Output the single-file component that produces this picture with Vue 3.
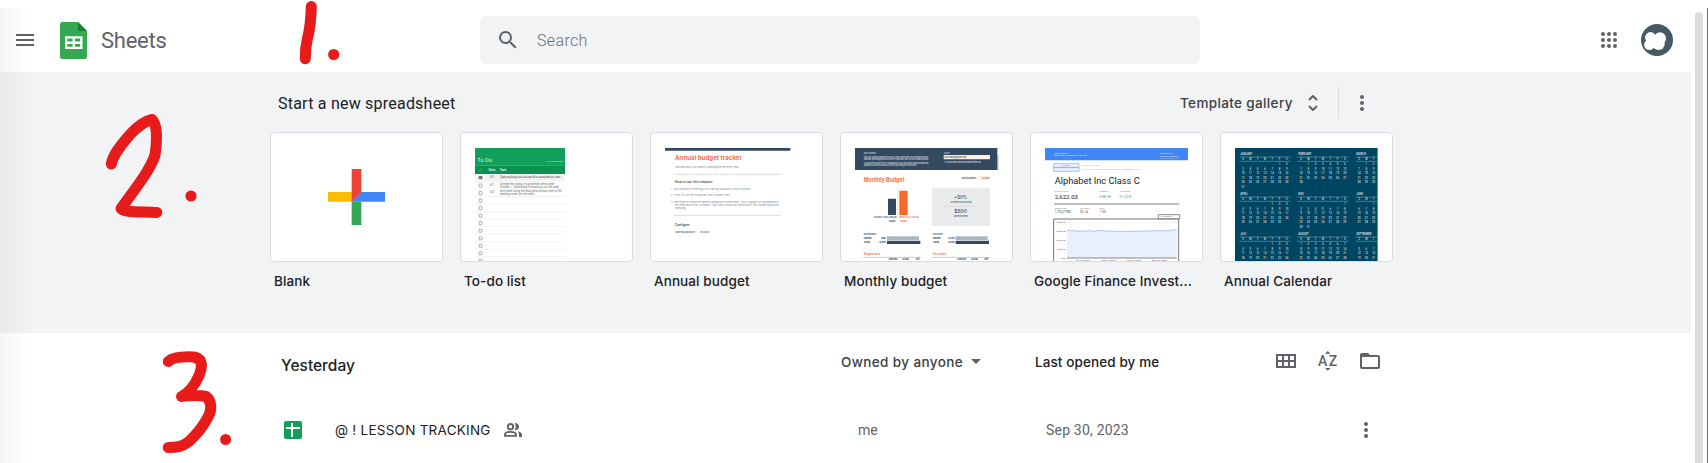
<script setup>
const todoRows = Array.from({ length: 11 }, (_, i) => 180 + i * 22.6)

const monthDefs = [
  ['JANUARY', 5, 31, 0, 0], ['FEBRUARY', 1, 28, 1, 0], ['MARCH', 1, 31, 2, 0],
  ['APRIL', 4, 30, 0, 1], ['MAY', 6, 31, 1, 1], ['JUNE', 2, 30, 2, 1],
  ['JULY', 4, 31, 0, 2], ['AUGUST', 0, 31, 1, 2], ['SEPTEMBER', 3, 30, 2, 2],
]
const weekdayNames = ['S', 'M', 'T', 'W', 'T', 'F', 'S']
const months = monthDefs.map(([name, start, count, col, row]) => {
  const x = 99 + col * 174
  const y = 90 + row * 120
  const days = []
  for (let d = 1; d <= count; d++) {
    const i = d - 1 + start
    days.push({ d, x: x + (i % 7) * 21.9, y: y + 31 + Math.floor(i / 7) * 13.3 })
  }
  return {
    name, x, y,
    end: Math.min(x + 143, 502),
    weekdays: weekdayNames.slice(0, col === 2 ? 3 : 7),
    days: days.filter(p => p.x < 498 && p.y < 406),
  }
})
</script>

<template>
  <div class="page">
    <div class="content">
      <header class="topbar">
        <svg class="menu" viewBox="0 0 18 12"><path d="M0 0h18v2H0zM0 5h18v2H0zM0 10h18v2H0z" /></svg>
        <svg class="logo" viewBox="0 0 27 37">
          <path d="M2.500 0H18l9 9v25.500a2.500 2.500 0 0 1-2.500 2.500h-22A2.500 2.500 0 0 1 0 34.500v-32A2.500 2.500 0 0 1 2.500 0z" fill="#34a853" />
          <path d="M18 0l9 9h-9z" fill="#188038" />
          <path d="M5 14.300h17.500v12.700H5z" fill="#fff" />
          <path d="M7.300 16.500h5.300v2.900H7.300zM14.900 16.500h5.300v2.900h-5.300zM7.300 21.900h5.300v2.900H7.300zM14.900 21.900h5.300v2.900h-5.300z" fill="#34a853" />
        </svg>
        <span class="brand">Sheets</span>
        <div class="search">
          <svg viewBox="0 0 24 24"><path d="M15.500 14h-.790l-.280-.270A6.471 6.471 0 0 0 16 9.500 6.500 6.500 0 1 0 9.500 16c1.610 0 3.090-.590 4.230-1.570l.270.280v.790l5 4.990L20.490 19l-4.990-5zm-6 0C7.010 14 5 11.990 5 9.500S7.010 5 9.500 5 14 7.010 14 9.500 11.990 14 9.500 14z" /></svg>
          <span class="hint">Search</span>
        </div>
        <svg class="apps" viewBox="0 0 16 16">
          <template v-for="r in 3" :key="r"><circle v-for="c in 3" :key="c" :cx="c * 6 - 4" :cy="r * 6 - 4" r="2" /></template>
        </svg>
        <svg class="avatar" viewBox="0 0 32 32">
          <circle cx="16" cy="16" r="16" fill="#455a64" />
          <g fill="#fff"><circle cx="9.500" cy="13.500" r="5.400" /><circle cx="19" cy="14.200" r="6" /><circle cx="8.300" cy="20.800" r="5.200" /><circle cx="17.500" cy="19.800" r="6.200" /><path d="M7 12h14v9H7z" /></g>
        </svg>
      </header>

      <section class="templates">
        <div class="templates-head">
          <h2 class="start">Start a new spreadsheet</h2>
          <span class="gallery">Template gallery</span>
          <svg class="unfold" viewBox="0 0 10 16"><path d="M1 5l4-4 4 4M1 11l4 4 4-4" /></svg>
          <i class="divider"></i>
          <svg class="dots" viewBox="0 0 4 16"><circle cx="2" cy="2" r="2" /><circle cx="2" cy="8" r="2" /><circle cx="2" cy="14" r="2" /></svg>
        </div>
        <div class="cards">
          <div class="card">
            <div class="thumb">
              <svg viewBox="33 39 513 384">
                <path d="M204 216h72v29h-72z" fill="#fbbc04" /><path d="M275 245h29v70h-29z" fill="#34a853" />
                <path d="M275 147h29v70l-29 28z" fill="#ea4335" /><path d="M304 216h71v29H275z" fill="#4285f4" />
              </svg>
            </div>
            <span class="label">Blank</span>
          </div>
          <div class="card">
            <div class="thumb">
              <svg viewBox="33 24 513 384">
                <path d="M75 69h270v52H75z" fill="#129f5b" /><path d="M75 121h270v26H75z" fill="#0d9150" /><path d="M75 147h270v23H75z" fill="#f3f3f3" />
                <g fill="#d9f2e5" font-family="Roboto">
                  <text x="82" y="110" font-size="17" textLength="45" lengthAdjust="spacingAndGlyphs">To Do</text><text x="285" y="110" font-size="7.500" textLength="54">1/3 completed</text>
                  <text x="88" y="137" font-size="10">✓</text><text x="116" y="137" font-size="9" font-weight="700" textLength="20">Date</text><text x="149" y="137" font-size="9" font-weight="700" textLength="20">Task</text>
                </g>
                <path v-for="y in todoRows" :key="'l' + y" :d="`M75 ${y + 12}h270`" stroke="#e6e6e6" stroke-width="1.500" />
                <rect v-for="y in todoRows" :key="y" x="87" :y="y - 3" width="9" height="9" rx="1" fill="none" stroke="#777" stroke-width="1.700" />
                <path d="M86 153h11v10H86z" fill="#777" />
                <g fill="#666" font-family="Roboto" font-size="8">
                  <text x="119" y="160" textLength="15">5/31</text><text x="119" y="183" textLength="15">6/11</text><text x="119" y="205" textLength="15">6/21</text>
                  <text x="149" y="160" textLength="182" text-decoration="line-through">Type anything into column B to complete an item</text>
                  <text x="149" y="179" textLength="165">Change the styling of completed items under</text><text x="149" y="188" textLength="178">'Format' &gt; 'Conditional Formatting' (on the web)</text>
                  <text x="149" y="201" textLength="186">Sort items using the drop down arrows next to the</text><text x="149" y="210" textLength="104">heading name (on the web)</text>
                </g>
              </svg>
            </div>
            <span class="label">To-do list</span>
          </div>
          <div class="card">
            <div class="thumb">
              <svg viewBox="33 24 513 384">
                <path d="M75 69h376v8H75z" fill="#334960" />
                <text x="105" y="106" font-family="Inter" font-weight="700" font-size="18" fill="#f5743a" textLength="201" lengthAdjust="spacingAndGlyphs">Annual budget tracker</text>
                <path d="M102 148h322M102 271h322" stroke="#ccc" stroke-width="2" />
                <g font-family="Inter" font-size="7.500" fill="#7d838c">
                  <text x="105" y="128" textLength="192">Plan and track your monthly spending for the entire year.</text>
                  <text x="93" y="194" textLength="240">1.  Get started by entering your starting balance in Row 13 below.</text>
                  <text x="93" y="213" textLength="178">2.  Then, fill out the 'Expenses' and 'Income' tabs.</text>
                  <text x="93" y="233" textLength="324">3.  Feel free to rename or delete categories in these tabs. Your changes will automatically</text>
                  <text x="105" y="243" textLength="311">be reflected on the 'Summary' tab, which shows an overview of your projected/actual</text><text x="105" y="252" textLength="34">spending.</text>
                </g>
                <g font-family="Inter" font-weight="700" font-size="9" fill="#4a5c70"><text x="105" y="175" textLength="113">How to use this template</text><text x="105" y="303" textLength="44">Configure</text></g>
                <g font-family="Inter" font-weight="600" font-size="7.500" fill="#666"><text x="105" y="324" textLength="62">Starting balance:</text><text x="181" y="324" textLength="26">$5,000</text></g>
              </svg>
            </div>
            <span class="label">Annual budget</span>
          </div>
          <div class="card">
            <div class="thumb">
              <svg viewBox="33 24 513 384">
                <path d="M75 69h427v66H75z" fill="#334960" /><path d="M502 90h3v45h-3z" fill="#8a97a5" /><path d="M341 90h139v13H341z" fill="#fdeee6" />
                <g font-family="Inter" font-size="7" font-weight="500" fill="#c9d1da">
                  <text x="101" y="87" textLength="37">GET STARTED</text><text x="343" y="87" textLength="16">NOTE</text>
                  <text x="101" y="99" textLength="193">Set your starting balance in cell L8, then customize your categories and</text><text x="101" y="106" textLength="195">planned spending amounts in the 'Expenses' and 'Income' tables below.</text>
                  <text x="101" y="117" textLength="195">As you enter data in the 'Transactions' tab, this sheet will automatically</text><text x="101" y="124" textLength="160">update to show a summary of your spending for the month.</text>
                  <text x="343" y="114" textLength="110">Try not to alter cells that contain a formula.</text>
                </g>
                <g font-family="Inter" font-size="7" font-weight="500" fill="#555"><text x="343" y="100" textLength="68">Only edit highlighted cells.</text><text x="394" y="162" textLength="47">Starting balance:</text></g>
                <path d="M445 153h35v13h-35z" fill="#fdeee6" /><text x="457" y="162" font-size="7" font-family="Inter" fill="#555" textLength="21">$1,000</text>
                <text x="101" y="171" font-family="Inter" font-weight="700" font-size="18" fill="#f5743a" textLength="122" lengthAdjust="spacingAndGlyphs">Monthly Budget</text>
                <path d="M306 188h174v115H306z" fill="#e9ebed" /><path d="M341 244h105M203 194v76" stroke="#ccc" stroke-width="1.500" />
                <path d="M174 221h24v49h-24z" fill="#334960" /><path d="M208 197h25v73h-25z" fill="#f5692c" />
                <g font-family="Inter" font-weight="600" font-size="7.500" fill="#334960">
                  <text x="131" y="279" textLength="69" lengthAdjust="spacingAndGlyphs">START BALANCE</text><text x="177" y="291" textLength="19">$1,000</text><text x="101" y="329" textLength="37">Expenses</text><text x="308" y="329" textLength="30">Income</text>
                  <text x="101" y="342" textLength="24">Planned</text><text x="101" y="354" textLength="19">Actual</text><text x="153" y="342" textLength="15">$950</text><text x="148" y="354" textLength="20">$1,000</text>
                  <text x="308" y="342" textLength="24">Planned</text><text x="308" y="354" textLength="19">Actual</text><text x="355" y="342" textLength="20">$1,450</text><text x="355" y="354" textLength="20">$1,500</text>
                  <text x="176" y="406" textLength="26">Planned</text><text x="216" y="406" textLength="20">Actual</text><text x="257" y="406" textLength="13">Diff.</text><text x="382" y="406" textLength="26">Planned</text><text x="423" y="406" textLength="20">Actual</text><text x="463" y="406" textLength="13">Diff.</text>
                  <text x="361" y="235" textLength="64" font-size="6" font-weight="400">Increase in total savings</text><text x="371" y="276" textLength="43" font-size="6" font-weight="400">Saved this month</text>
                </g>
                <g font-family="Inter" font-weight="500" font-size="14" fill="#334960"><text x="373" y="223" textLength="38" lengthAdjust="spacingAndGlyphs">+50%</text><text x="373" y="265" textLength="38" lengthAdjust="spacingAndGlyphs">$500</text></g>
                <g font-family="Inter" font-weight="600" font-size="7.500" fill="#f5692c"><text x="207" y="279" textLength="60" lengthAdjust="spacingAndGlyphs">END BALANCE</text><text x="211" y="291" textLength="19">$1,500</text><text x="101" y="389" font-size="10" textLength="49">Expenses</text><text x="308" y="389" font-size="10" textLength="41">Income</text></g>
                <path d="M171 334h96v11h-96zM377 334h96v11h-96z" fill="#adb6bf" /><path d="M171 347h100v10H171zM377 347h100v10H377z" fill="#334960" /><path d="M100 397h172M307 397h173" stroke="#8795a3" stroke-width="1.500" />
              </svg>
            </div>
            <span class="label">Monthly budget</span>
          </div>
          <div class="card">
            <div class="thumb">
              <svg viewBox="33 24 513 384">
                <path d="M75 69h429v37H75z" fill="#4285f4" />
                <g fill="#e3edff" font-family="Roboto" font-size="7.500"><text x="103" y="86" textLength="42">Instructions:</text><text x="103" y="94" textLength="98">Enter stock symbol in cell B4</text><text x="419" y="86" textLength="39">Powered by</text><text x="419" y="97" textLength="54" text-decoration="underline">Google Finance</text></g>
                <path d="M101 116h76v11h-76zM101 128h76v11h-76z" fill="#edf3fe" stroke="#7aa7f5" stroke-width="2" />
                <text x="128" y="124" font-size="6.500" font-family="Roboto" textLength="22">GOOG</text>
                <g fill="#aaa" font-family="Roboto" font-size="7"><text x="181" y="124" textLength="60">← enter a symbol</text><text x="181" y="136" textLength="180">← optionally, enter an exchange (ex: NASDAQ, NYSE)</text></g>
                <g fill="#222" font-family="Roboto"><text x="104" y="177" font-size="27" textLength="255" lengthAdjust="spacingAndGlyphs">Alphabet Inc Class C</text><text x="104" y="221" font-size="18" textLength="70" lengthAdjust="spacingAndGlyphs">2,622.03</text></g>
                <g fill="#777" font-family="Roboto" font-size="6.500"><text x="104" y="201" textLength="41">Current Price</text><text x="239" y="201" textLength="23">Change</text><text x="299" y="201" textLength="32">% Change</text><text x="104" y="253" textLength="36">Market Cap</text><text x="179" y="253" textLength="29">P/E Ratio</text><text x="239" y="253" textLength="14">Beta</text></g>
                <g fill="#36a261" font-family="Roboto" font-size="11"><text x="238" y="219" textLength="35">+38.95</text><text x="298" y="219" textLength="36">+1.02%</text></g>
                <g fill="#444" font-family="Roboto" font-size="9"><text x="104" y="265" textLength="48">1,753,279M</text><text x="179" y="265" textLength="24">30.14</text><text x="239" y="265" textLength="18">1.00</text></g>
                <path d="M102 237h376" stroke="#aaa" stroke-width="4" /><path d="M101 408V282h375v126" fill="none" stroke="#777" stroke-width="3" />
                <path d="M415 269h64v12h-64z" fill="#fff" stroke="#555" stroke-width="2" /><text x="420" y="277" font-family="Roboto" font-size="7" textLength="35">12 Months</text>
                <path d="M141 293h330M141 319h330M141 346h330M141 373h330" stroke="#e2e2e2" stroke-width="1.500" />
                <path d="M141 316L185 319 210 317 222 319 237 316 260 318 300 320 380 318 445 317 470 314V399H141z" fill="#e8f0fe" /><path d="M141 316L185 319 210 317 222 319 237 316 260 318 300 320 380 318 445 317 470 314" fill="none" stroke="#9dbff8" stroke-width="2.500" /><path d="M141 399h330" stroke="#888" stroke-width="3" />
                <g fill="#555" font-family="Roboto" font-size="7"><text x="109" y="295" textLength="28">4000.00</text><text x="109" y="321" textLength="28">3000.00</text><text x="109" y="348" textLength="28">2000.00</text><text x="109" y="375" textLength="28">1000.00</text><text x="123" y="401" textLength="14">0.00</text><text x="167" y="408" textLength="41">Jul 19, 2020</text><text x="245" y="408" textLength="40">Sep 3, 2020</text><text x="321" y="408" textLength="41">Nov 5, 2020</text><text x="396" y="408" textLength="44">Dec 10, 2020</text></g>
              </svg>
            </div>
            <span class="label">Google Finance Invest...</span>
          </div>
          <div class="card">
            <div class="thumb">
              <svg viewBox="33 24 513 384">
                <path d="M75 69h429v339H75z" fill="#004561" /><path d="M503 69v339" stroke="#b4c6ce" stroke-width="2" />
                <g font-family="Roboto" fill="#c9d8df">
                  <g v-for="m in months" :key="m.name">
                    <text :x="m.x - 8" :y="m.y" font-size="8" font-weight="700">{{ m.name }}</text>
                    <path :d="`M${m.x - 11} ${m.y + 6}H${m.end}M${m.x - 11} ${m.y + 19}H${m.end}`" stroke="#8fadb9" stroke-width="1.500" />
                    <text v-for="(w, i) in m.weekdays" :key="i" :x="m.x + i * 21.9" :y="m.y + 15" font-size="8" font-weight="500" text-anchor="middle">{{ w }}</text>
                    <text v-for="d in m.days" :key="d.d" :x="d.x" :y="d.y" font-size="8.500" font-weight="500" text-anchor="middle">{{ d.d }}</text>
                  </g>
                </g>
              </svg>
            </div>
            <span class="label">Annual Calendar</span>
          </div>
        </div>
      </section>

      <section class="files">
        <div class="files-head">
          <h3 class="day">Yesterday</h3>
          <span class="owner">Owned by anyone</span>
          <svg class="caret" viewBox="0 0 10 5"><path d="M0 0h10L5 5z" /></svg>
          <span class="opened">Last opened by me</span>
          <div class="tools">
            <svg class="grid-icon" viewBox="0 0 20 14"><path fill-rule="evenodd" d="M0 0h20v14H0zM2 2v4h4V2zM8 2v4h4V2zM14 2v4h4V2zM2 8v4h4V8zM8 8v4h4V8zM14 8v4h4V8z" /></svg>
            <svg class="az" viewBox="0 0 20 20"><text x="0" y="15">A</text><text x="10.800" y="15">Z</text><path d="M7 2.700h5.600L9.800 0zM7 17h5.600l-2.800 2.700z" /></svg>
            <svg class="folder" viewBox="0 0 20 16"><path d="M18 2h-8L8 0H2C.900 0 0 .900 0 2v12c0 1.100.900 2 2 2h16c1.100 0 2-.900 2-2V4c0-1.100-.900-2-2-2zm0 12H2V4h16z" /></svg>
          </div>
        </div>
        <div class="row">
          <svg class="sheet-icon" viewBox="0 0 18 18"><rect width="18" height="18" rx="2" fill="#129f5b" /><path d="M7 2h2v4h7v2H9v8H7V8H2V6h5z" fill="#fff" /></svg>
          <span class="title">@ ! LESSON TRACKING</span>
          <svg class="people" viewBox="0 0 18 14">
            <g class="front"><circle cx="6.500" cy="3.700" r="2.700" /><path d="M1 12.900v-1.300c0-1.600 2.500-2.700 5.500-2.700s5.500 1.100 5.500 2.700v1.300z" /></g>
            <path d="M10.700 0c2.500 0 4.300 1.500 4.300 3.700S13.200 7.400 10.700 7.300C12 5.500 12 2 10.700 0zM13.700 8.300c2.600.500 4.300 1.600 4.300 3.300V14h-3v-2.400c0-1.400-.500-2.400-1.300-3.300z" />
          </svg>
          <span class="by">me</span>
          <span class="date">Sep 30, 2023</span>
          <svg class="dots" viewBox="0 0 4 16"><circle cx="2" cy="2" r="2" /><circle cx="2" cy="8" r="2" /><circle cx="2" cy="14" r="2" /></svg>
        </div>
      </section>
    </div>
    <div class="gutter"><i class="bar"></i><i class="edge"></i></div>
    <div class="shade"></div>
    <svg class="marks" viewBox="0 0 1708 463">
      <g fill="none" stroke="#e81b1b" stroke-width="11" stroke-linecap="round" stroke-linejoin="round">
        <path d="M311.300 6.500C311 17 310.500 25 308.500 34S305 46 305.300 58.700" />
        <path d="M111.300 164C113 154 122 144 130 134.500C138 126 145 121 152 119.500C157 124 157.500 138 155 155C150 171 134 190 121 208.500C123 212.500 140 211.500 156.800 212.500" />
        <path d="M168.300 361.500C173 357 184 356.500 194 357C204 359 202 368 199 375.500C195 385 188 393 181.500 396.500C188 395 202 395 206 396.500C212 401 212 410 208 417C203 427 196 435 189 441.500C182 447 176 447.500 168.300 447.500" />
      </g>
      <g fill="#e81b1b"><circle cx="333.700" cy="54.500" r="5.600" /><circle cx="191" cy="196" r="5.600" /><circle cx="225.600" cy="439.500" r="5.500" /></g>
    </svg>
  </div>
</template>

<style>
body { background: #fff; }
</style>

<style scoped>
.page { position: relative; display: flex; width: 1708px; height: 463px; overflow: hidden; font-family: Roboto, "Liberation Sans", sans-serif; color: #202124; }
.content { width: 1691px; }
svg { display: block; flex: none; fill: #5f6368; }
span, h2, h3 { white-space: nowrap; font-weight: 400; margin: 0; flex: none; }
.topbar { display: flex; align-items: center; height: 72px; padding-top: 8px; box-sizing: border-box; }
.menu { width: 18px; height: 12px; margin-left: 16px; }
.logo { width: 27px; height: 37px; margin-left: 25.500px; }
.brand { font-size: 22px; line-height: 28px; letter-spacing: -.25px; color: #5f6368; margin: 1px 0 0 14.500px; width: 379px; }
.search { display: flex; align-items: center; box-sizing: border-box; width: 720px; height: 48px; padding-left: 16px; background: #f1f3f4; border-radius: 8px; font-size: 16px; color: #6c7075; }
.search svg { width: 24px; height: 24px; margin-right: 17px; }
.hint { font-weight: 300; letter-spacing: .35px; }
.apps { width: 16px; height: 16px; margin-left: 401px; }
.avatar { width: 32px; height: 32px; margin-left: 24px; }
.templates { height: 261px; background: #f1f3f4; box-sizing: border-box; padding: 1px 0 0 270px; }
.templates-head { display: flex; align-items: center; height: 60px; }
.start { font-size: 16px; letter-spacing: .22px; width: 902px; margin-left: 8px; }
.gallery, .label, .owner, .opened, .title { font-family: Inter, sans-serif; font-size: 13.500px; font-weight: 500; letter-spacing: .1px; }
.gallery { color: #3c4043; width: 128px; letter-spacing: .36px; }
.unfold { width: 10px; height: 16px; fill: none; stroke: #5f6368; stroke-width: 2; }
.divider { width: 1px; height: 32px; background: #dadce0; margin: 0 21px 0 20px; }
.dots { width: 4px; height: 16px; }
.cards { display: flex; gap: 17px; margin-top: -1px; }
.card { width: 173px; }
.thumb { box-sizing: border-box; width: 173px; height: 130px; background: #fff; border: 1px solid #dadce0; border-radius: 4px; overflow: hidden; }
.thumb svg { width: 171px; height: 128px; }
.label { display: block; margin: 10px 0 0 4px; line-height: 18px; }
.files { padding-left: 281px; }
.files-head { display: flex; align-items: center; height: 56px; }
.day { font-family: Inter, sans-serif; font-size: 15.500px; font-weight: 500; width: 560px; padding-top: 8px; }
.owner { color: #3c4043; width: 130px; padding-top: 1px; letter-spacing: .38px; }
.caret { width: 10px; height: 5px; }
.opened { margin-left: 54px; width: 241px; padding-top: 1px; }
.tools { display: flex; align-items: center; }
.grid-icon { width: 20px; height: 14px; }
.az { width: 20px; height: 20px; margin: 0 22px; font: 500 14px Roboto, sans-serif; }
.folder { width: 20px; height: 16px; }
.row { display: flex; align-items: center; height: 82px; }
.sheet-icon { width: 18px; height: 18px; margin-left: 3px; }
.title { font-weight: 400; letter-spacing: .25px; margin-left: 33px; width: 169px; }
.people { width: 18px; height: 14px; }
.front { fill: none; stroke: #5f6368; stroke-width: 1.900; }
.by { font-size: 14px; color: #5f6368; margin-left: 336px; width: 188px; }
.date { font-size: 14px; letter-spacing: .2px; color: #5f6368; width: 318px; }
.gutter { display: flex; justify-content: space-between; width: 13px; padding-left: 4px; }
.bar { width: 8px; height: 460px; margin-top: 12px; background: #dadce0; border-radius: 4px; }
.edge { width: 1px; height: 455px; margin-top: 8px; background: #6b6b6b; }
.shade { position: absolute; left: 0; top: 8px; width: 28px; height: 455px; background: linear-gradient(90deg, rgba(0, 0, 0, .045), rgba(0, 0, 0, 0)); }
.marks { position: absolute; left: 0; top: 0; width: 1708px; height: 463px; }
</style>
